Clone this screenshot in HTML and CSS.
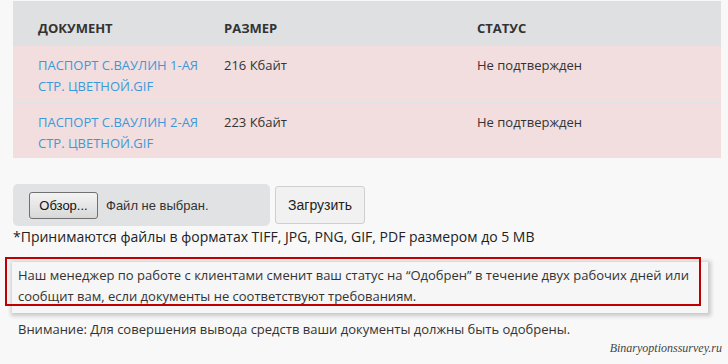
FILE: index.html
```html
<!DOCTYPE html>
<html lang="ru">

<head>
  <title>Документы</title>
  <meta charset="UTF-8" />
  <meta name="viewport" content="width=device-width,initial-scale=1" />
  <link rel="stylesheet" href="styles.css">
</head>

<body>
  <div class="docs">
    <div class="docs-row docs-head">
      <div class="cell first">Документ</div>
      <div class="cell">Размер</div>
      <div class="cell">Статус</div>
    </div>
    <div class="docs-row">
      <div class="cell first"><a href="#" class="doc-link">Паспорт С.Ваулин 1-ая стр. цветной.gif</a></div>
      <div class="cell">216 Кбайт</div>
      <div class="cell">Не подтвержден</div>
    </div>
    <div class="docs-row">
      <div class="cell first"><a href="#" class="doc-link">Паспорт С.Ваулин 2-ая стр. цветной.gif</a></div>
      <div class="cell">223 Кбайт</div>
      <div class="cell">Не подтвержден</div>
    </div>
  </div>

  <div class="upload">
    <div class="file-box">
      <span class="browse-btn">Обзор...</span>
      <span class="file-name">Файл не выбран.</span>
    </div>
    <button class="upload-btn">Загрузить</button>
  </div>
  <p class="formats">*Принимаются файлы в форматах TIFF, JPG, PNG, GIF, PDF размером до 5 MB</p>

  <div class="notice-wrap">
    <div class="notice">
      Наш менеджер по работе с клиентами сменит ваш статус на “Одобрен” в течение двух рабочих дней или
      сообщит вам, если документы не соответствуют требованиям.
    </div>
    <div class="marker"></div>
  </div>

  <p class="warning">Внимание: Для совершения вывода средств ваши документы должны быть одобрены.</p>

  <div class="watermark">Binaryoptionssurvey.ru</div>
</body>

</html>
```

FILE: styles.css
```css
body,
html {
  margin: 0;
  padding: 0;
  border: 0;
}

body {
  background: #f8f8f8;
  font-family: "Open Sans", "Noto Sans", sans-serif;
  color: #333;
}

.docs {
  margin: 1px 7px 0 13px;
}

.docs-row {
  display: grid;
  grid-template-columns: 211px 253px 1fr;
  background: #f2dede;
  font-size: 13px;
  line-height: 21px;
  height: 56px;
  box-sizing: border-box;
  padding-top: 9px;
}

.docs-row + .docs-row {
  border-top: 1px solid #dfe3e6;
}

.docs-head {
  background: #dfe0e2;
  height: 45px;
  padding-top: 17px;
  font-weight: bold;
  text-transform: uppercase;
  color: #333;
}

.docs-head + .docs-row {
  border-top: 0;
}

.cell.first {
  padding-left: 25px;
  padding-right: 10px;
}

.doc-link {
  color: #3a9ad9;
  text-decoration: none;
  text-transform: uppercase;
}

.upload {
  display: flex;
  align-items: center;
  gap: 5px;
  margin: 26px 0 0 13px;
}

.file-box {
  display: flex;
  align-items: center;
  width: 257px;
  height: 42px;
  box-sizing: border-box;
  padding-left: 16px;
  background: #e1e2e3;
  border-radius: 5px;
  font-family: "Liberation Sans", Arial, sans-serif;
  font-size: 13px;
}

.browse-btn {
  display: inline-block;
  width: 69px;
  height: 27px;
  line-height: 25px;
  box-sizing: border-box;
  text-align: center;
  border: 1px solid #707070;
  border-radius: 3px;
  background: linear-gradient(#f3f3f3, #e6e6e6 50%, #d8d8d8);
  color: #111;
}

.file-name {
  margin-left: 8px;
  color: #333;
}

.upload-btn {
  width: 90px;
  height: 38px;
  border: 1px solid #cfcfcf;
  border-radius: 3px;
  background: #f1f1f1;
  font-family: "Liberation Sans", Arial, sans-serif;
  font-size: 14px;
  color: #222;
  padding: 0;
}

.formats {
  margin: 2px 0 0 13px;
  font-size: 14px;
  line-height: 18px;
  color: #222;
}

.notice-wrap {
  position: relative;
  margin: 16px 0 0 12px;
  width: 696px;
}

.notice {
  background: #f6f6f6;
  box-shadow: 1px 1px 4px 2px #c8c8c8;
  padding: 3px 0 6px 6px;
  font-size: 13px;
  line-height: 21px;
  color: #333;
}

.marker {
  position: absolute;
  left: -7px;
  top: -5px;
  width: 696px;
  height: 49px;
  box-sizing: border-box;
  border: 2px solid #c00000;
}

.warning {
  margin: 5px 0 0 18px;
  font-size: 13px;
  line-height: 22px;
  color: #333;
}

.watermark {
  text-align: right;
  margin: 0 6px 0 0;
  font-family: "Liberation Serif", serif;
  font-style: italic;
  font-size: 12px;
  line-height: 16px;
  color: #444;
}
```
